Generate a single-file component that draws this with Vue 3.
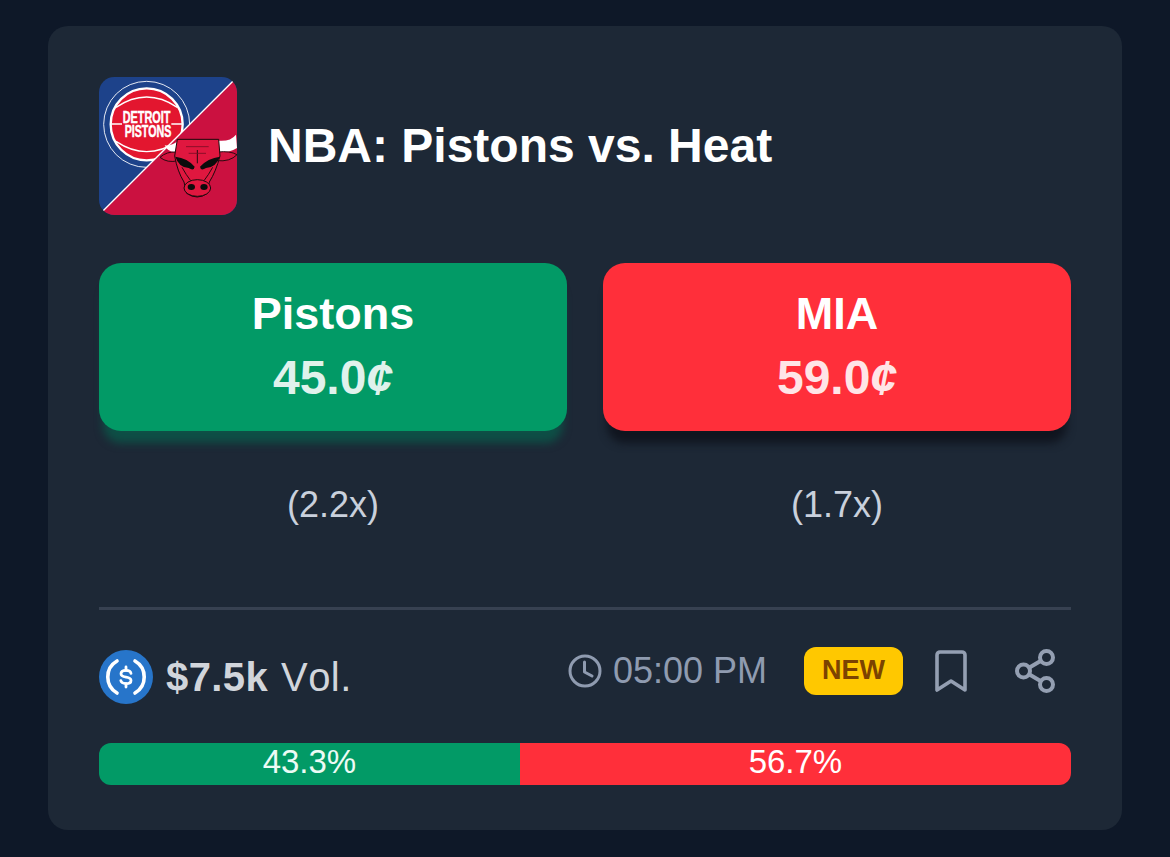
<script setup>
const outcomes = [
  { name: 'Pistons', price: '45.0', multi: '(2.2x)', tone: 'green' },
  { name: 'MIA', price: '59.0', multi: '(1.7x)', tone: 'red' },
]
const shares = [
  { label: '43.3%', pct: 43.3, tone: 'green' },
  { label: '56.7%', pct: 56.7, tone: 'red' },
]
</script>

<template>
  <main class="page">
    <section class="card">
      <header class="head">
        <svg class="logo" viewBox="27 21 414 414" aria-hidden="true">
          <defs>
            <clipPath id="logoClip"><rect x="27" y="21" width="414" height="414" rx="46" /></clipPath>
          </defs>
          <g clip-path="url(#logoClip)">
            <rect x="27" y="21" width="414" height="414" fill="#1d428a" />
            <circle cx="170" cy="163" r="129" fill="none" stroke="#e4e8f2" stroke-width="3" />
            <circle cx="170" cy="163" r="108" fill="#e3162f" stroke="#fff" stroke-width="7" />
            <path d="M78 112 Q170 50 262 112" fill="none" stroke="#fff" stroke-width="4" />
            <path d="M78 214 Q170 276 262 214" fill="none" stroke="#fff" stroke-width="4" />
            <path d="M63 162 H96 M244 162 H277" stroke="#fff" stroke-width="4" />
            <text class="logo-text" x="98" y="158" textLength="143" lengthAdjust="spacingAndGlyphs">DETROIT</text>
            <text class="logo-text" x="104" y="200" textLength="140" lengthAdjust="spacingAndGlyphs">PISTONS</text>
            <path d="M441 21 V435 H27 Z" fill="#cb1140" />
            <path d="M38 424 L430 32" stroke="#fff" stroke-width="4" />
            <path d="M224 226 Q246 228 264 212 L264 246 Q234 250 224 226 Z" fill="#fff" />
            <path d="M384 212 Q420 216 438 194 L441 234 Q420 248 384 248 Z" fill="#fff" />
            <path d="M260 246 Q230 244 210 262 Q232 280 264 272 Z" fill="#d5143f" stroke="#2a0a10" stroke-width="3" />
            <path d="M384 246 Q420 242 441 254 Q420 276 380 272 Z" fill="#d5143f" stroke="#2a0a10" stroke-width="3" />
            <path d="M262 208 H386 L390 258 Q378 304 358 336 L352 370 Q322 392 290 370 L282 336 Q262 304 254 258 Z" fill="#e0173f" stroke="#1a0a0c" stroke-width="3" />
            <path d="M256 260 Q292 264 314 290 Q312 304 296 294 Q266 292 256 260 Z" fill="#0c0c0c" />
            <path d="M390 260 Q354 264 330 290 Q332 304 348 294 Q378 292 390 260 Z" fill="#0c0c0c" />
            <path d="M276 292 Q288 314 302 332 M368 292 Q356 314 342 332 M322 240 V280" fill="none" stroke="#2a0a10" stroke-width="3" />
            <path d="M288 230 H356 M296 250 H348" fill="none" stroke="#7a0c24" stroke-width="2.5" />
            <ellipse cx="322" cy="354" rx="40" ry="25" fill="#e0173f" stroke="#1a0a0c" stroke-width="3" />
            <ellipse cx="304" cy="351" rx="11" ry="9" fill="#0c0c0c" />
            <ellipse cx="342" cy="351" rx="11" ry="9" fill="#0c0c0c" />
          </g>
        </svg>
        <h1 class="title">NBA: Pistons vs. Heat</h1>
      </header>

      <div class="outcomes">
        <div v-for="o in outcomes" :key="o.name" class="outcome">
          <button type="button" class="pick" :class="o.tone">
            <span class="pick-name">{{ o.name }}</span>
            <span class="pick-price">{{ o.price }}<i>¢</i></span>
          </button>
          <div class="multi">{{ o.multi }}</div>
        </div>
      </div>

      <div class="divider"></div>

      <footer class="meta">
        <div class="volume">
          <svg class="usdc" viewBox="0 0 54 54" aria-hidden="true">
            <circle cx="27" cy="27" r="27" fill="#2775ca" />
            <path d="M18 11 A18.5 18.5 0 0 0 18 43" fill="none" stroke="#fff" stroke-width="3.6" stroke-linecap="round" />
            <path d="M36 11 A18.5 18.5 0 0 1 36 43" fill="none" stroke="#fff" stroke-width="3.6" stroke-linecap="round" />
            <path d="M32 23.4 C31.6 21.4 29.6 20.4 27 20.4 C24 20.4 22 21.8 22 23.8 C22 28.8 32 25.6 32 30.4 C32 32.4 30 33.6 27 33.6 C24.2 33.6 22.2 32.6 21.8 30.6" fill="none" stroke="#fff" stroke-width="2.8" stroke-linecap="round" />
            <path d="M27 17 V20.4 M27 33.6 V37" stroke="#fff" stroke-width="2.8" stroke-linecap="round" />
          </svg>
          <span class="vol-text"><b>$7.5k</b> Vol.</span>
        </div>
        <div class="tools">
          <svg class="clock" viewBox="0 0 34 34" aria-hidden="true">
            <circle cx="17" cy="17" r="15" fill="none" stroke="#8f9bb0" stroke-width="3" />
            <path d="M16.5 8 V18 L24 22" fill="none" stroke="#8f9bb0" stroke-width="3" stroke-linecap="round" stroke-linejoin="round" />
          </svg>
          <span class="time">05:00 PM</span>
          <span class="badge">NEW</span>
          <svg class="bookmark" viewBox="0 0 32 42" aria-hidden="true">
            <path d="M2 5 a3 3 0 0 1 3-3 h22 a3 3 0 0 1 3 3 v35 l-14-9 -14 9 Z" fill="none" stroke="#949fb2" stroke-width="3.6" stroke-linejoin="round" />
          </svg>
          <svg class="share" viewBox="0 0 42 44" aria-hidden="true">
            <circle cx="32.5" cy="8.5" r="6.5" fill="none" stroke="#949fb2" stroke-width="4" />
            <circle cx="9.5" cy="22" r="6.5" fill="none" stroke="#949fb2" stroke-width="4" />
            <circle cx="32.5" cy="35.5" r="6.5" fill="none" stroke="#949fb2" stroke-width="4" />
            <path d="M15.5 18.5 L26.5 12 M15.5 25.5 L26.5 32" stroke="#949fb2" stroke-width="4" />
          </svg>
        </div>
      </footer>

      <div class="bar">
        <div v-for="s in shares" :key="s.label" class="segment" :class="s.tone" :style="{ width: s.pct + '%' }">{{ s.label }}</div>
      </div>
    </section>
  </main>
</template>

<style scoped>
.page {
  min-height: 857px;
  box-sizing: border-box;
  padding: 26px 48px 27px;
  background: #0e1828;
  font-family: "Liberation Sans", Arial, sans-serif;
}
.card {
  box-sizing: border-box;
  height: 804px;
  padding: 51px 51px 45px;
  border-radius: 20px;
  background: #1d2836;
}
.head {
  display: flex;
  align-items: center;
  gap: 31px;
  height: 138px;
}
.logo {
  width: 138px;
  height: 138px;
  flex: none;
}
.logo-text {
  font-family: "Liberation Sans", Arial, sans-serif;
  font-weight: 700;
  font-size: 47px;
  fill: #fff;
  stroke: #fff;
  stroke-width: 1.5px;
}
.title {
  margin: 0;
  font-size: 48px;
  font-weight: 700;
  line-height: 56px;
  color: #fff;
}
.outcomes {
  display: grid;
  grid-template-columns: 1fr 1fr;
  gap: 36px;
  margin-top: 48px;
}
.pick {
  display: flex;
  flex-direction: column;
  align-items: center;
  justify-content: center;
  gap: 12px;
  width: 100%;
  height: 168px;
  padding: 0 0 2px;
  border: 0;
  border-radius: 22px;
  font-family: inherit;
  font-weight: 700;
  color: #fff;
}
.pick.green {
  background: #029a66;
  box-shadow: 0 16px 8px -4px #0e4f46;
}
.pick.red {
  background: #ff2f3a;
  box-shadow: 0 16px 8px -4px #10151f;
}
.pick-name {
  font-size: 45px;
  line-height: 52px;
}
.pick-price {
  font-size: 48px;
  line-height: 52px;
  opacity: 0.88;
}
.pick-price i {
  font-style: italic;
}
.multi {
  margin-top: 53px;
  text-align: center;
  font-size: 36px;
  line-height: 42px;
  color: #c9d0dc;
}
.divider {
  height: 3px;
  margin-top: 81px;
  background: #374151;
}
.meta {
  display: flex;
  align-items: center;
  justify-content: space-between;
  height: 54px;
  margin-top: 40px;
  padding-right: 15px;
}
.volume {
  display: flex;
  align-items: center;
  gap: 13px;
}
.usdc {
  width: 54px;
  height: 54px;
}
.vol-text {
  font-size: 40px;
  line-height: 46px;
  color: #d1d5db;
  font-kerning: none;
  letter-spacing: 0.4px;
  word-spacing: 1.5px;
}
.vol-text b {
  font-weight: 700;
}
.tools {
  display: flex;
  align-items: center;
  margin-top: -12px;
}
.clock {
  width: 34px;
  height: 34px;
  margin-right: 11px;
}
.time {
  font-size: 36px;
  line-height: 42px;
  color: #8f9bb0;
  margin-right: 37px;
}
.badge {
  box-sizing: border-box;
  width: 99px;
  height: 48px;
  margin-right: 32px;
  border-radius: 12px;
  background: #ffc800;
  text-align: center;
  font-size: 27px;
  font-weight: 700;
  line-height: 46px;
  color: #7c4300;
}
.bookmark {
  width: 32px;
  height: 42px;
  margin-right: 47px;
}
.share {
  width: 42px;
  height: 44px;
}
.bar {
  display: flex;
  height: 42px;
  margin-top: 39px;
  border-radius: 12px;
  overflow: hidden;
}
.segment {
  text-align: center;
  font-size: 33px;
  line-height: 38px;
  color: #fff;
}
.segment.green {
  background: #029a66;
  color: #ecfbf5;
}
.segment.red {
  background: #ff2f3a;
}
</style>
